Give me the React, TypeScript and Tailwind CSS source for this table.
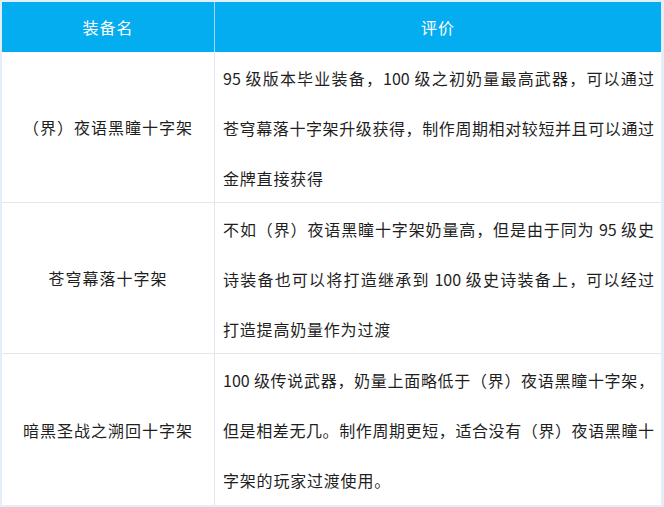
const rows = [
  {
    name: "（界）夜语黑瞳十字架",
    lines: [
      "95 级版本毕业装备，100 级之初奶量最高武器，可以通过",
      "苍穹幕落十字架升级获得，制作周期相对较短并且可以通过",
      "金牌直接获得",
    ],
  },
  {
    name: "苍穹幕落十字架",
    lines: [
      "不如（界）夜语黑瞳十字架奶量高，但是由于同为 95 级史",
      "诗装备也可以将打造继承到 100 级史诗装备上，可以经过",
      "打造提高奶量作为过渡",
    ],
  },
  {
    name: "暗黑圣战之溯回十字架",
    lines: [
      "100 级传说武器，奶量上面略低于（界）夜语黑瞳十字架，",
      "但是相差无几。制作周期更短，适合没有（界）夜语黑瞳十",
      "字架的玩家过渡使用。",
    ],
  },
];

export default function App() {
  return (
    <div className="w-[664px] h-[507px] bg-[#e4eef7] pt-[2px] pl-[2px] pr-[3px] pb-[2px] font-['Noto_Sans_CJK_SC',sans-serif] text-[16px]">
      <div className="flex h-[50px] bg-[#03adef] text-white">
        <div className="w-[213px] shrink-0 flex items-center justify-center border-r border-[#9ed9f6] tracking-[1px]">
          装备名
        </div>
        <div className="flex-1 flex items-center justify-center tracking-[1px]">评价</div>
      </div>
      {rows.map((row, i) => (
        <div
          key={row.name}
          className={
            i < rows.length - 1
              ? "flex h-[151px] bg-white text-[#1f1f1f] border-b border-[#e3e8ee]"
              : "flex h-[151px] bg-white text-[#1f1f1f]"
          }
        >
          <div className="w-[213px] shrink-0 flex items-center justify-center border-r border-[#e3e6ea] tracking-[1px]">
            {row.name}
          </div>
          <div className="flex-1 min-w-0 pl-2 pr-[7px] pt-[1px]">
            {row.lines.map((line, j) => (
              <div
                key={j}
                className={
                  j < row.lines.length - 1
                    ? "leading-[50px] whitespace-nowrap text-justify [text-align-last:justify]"
                    : "leading-[50px] whitespace-nowrap tracking-[0.8px]"
                }
              >
                {line}
              </div>
            ))}
          </div>
        </div>
      ))}
    </div>
  );
}
